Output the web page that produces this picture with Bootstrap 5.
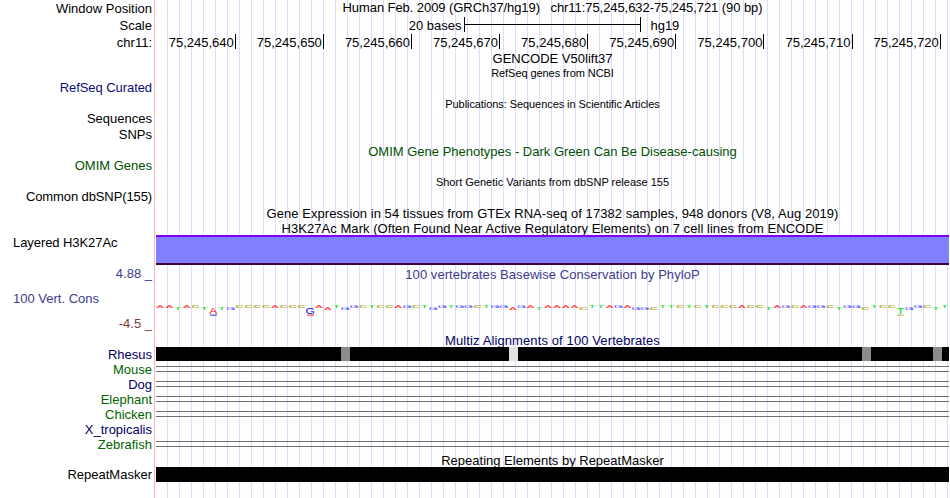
<!DOCTYPE html>
<html lang="en">
<head>
  <meta charset="UTF-8">
  <meta name="viewport" content="width=device-width, initial-scale=1">
  <title>chr11:75,245,632-75,245,721</title>
  <link href="https://cdn.jsdelivr.net/npm/bootstrap@5.3.3/dist/css/bootstrap.min.css" rel="stylesheet">
  <style>
    body { font: 13px/15px "Liberation Sans", Arial, sans-serif; color: #000; }
    .browser { width: 949px; height: 498px; }
    .browser::before {
      content: ""; position: absolute; inset: 0 0 0 154px; z-index: -1;
      border-left: 1px solid #ffb4b4;
      background: repeating-linear-gradient(90deg, #dcdcff 0 1px, transparent 1px 12px) 12px 0 no-repeat;
    }
    .line { white-space: pre; }
    .label { width: 152px; margin-right: 4px; flex: none; text-align: right; }
    .label.start { text-align: left; padding-left: 13px; }
    .track { flex: 1; min-width: 0; align-self: stretch; display: flex; align-items: center; justify-content: center; }
    .raise { padding-bottom: 2px; }
    .raise-more { padding-bottom: 4px; }
    .drop { padding-top: 2px; }
    .tiny { font-size: 11px; }
    .tight { letter-spacing: -.07px; }
    .tighter { letter-spacing: -.11px; }
    .loose { letter-spacing: .05px; }
    .looser { letter-spacing: .11px; }
    .h10 { height: 10px; } .h12 { height: 12px; } .h13 { height: 13px; }
    .h14 { height: 14px; } .h15 { height: 15px; } .h16 { height: 16px; }
    .h17 { height: 17px; } .h18 { height: 18px; } .h19 { height: 19px; }
    .h22 { height: 22px; } .h29 { height: 29px; } .h30 { height: 30px; }
    .navy { color: #0c0c78; } .forest { color: #005000; } .species { color: #006400; }
    .midnight { color: #000064; } .cons { color: #3c3c8c; } .neg { color: #783c3c; }
    .scale { padding-right: 17px; }
    .ruler { width: 177px; height: 15px; margin: 0 9px 2px 3px; border: solid #000; border-width: 0 1px; }
    .ruler::before { content: ""; display: block; height: 8px; border-bottom: 1px solid #000; }
    .ticks { justify-content: flex-start; align-items: flex-start; }
    .ticks span { width: 88.12px; flex: none; text-align: right; padding-right: 1px; border-right: 1px solid #000; height: 15px; line-height: 18px; }
    .ticks span:first-child { width: 79.75px; }
    .acetyl { background: #8080ff; border-top: 2px solid #8000ff; border-bottom: 2px solid #400040; }
    .logo { padding-top: 16px; }
    .logo span { flex: 1 1 0; width: 0; display: flex; justify-content: center; height: 10px; line-height: 10px; font-size: 12px; transform: scaleY(.22); }
    .logo .low { transform: translateY(2px) scaleY(.22); }
    .logo .tall { transform: translateY(4px) scaleY(.7); opacity: 1; }
    .logo .tall::after { content: ""; position: absolute; left: 1px; right: 1px; top: 10px; height: 1.5px; opacity: .6; }
    .base-A { color: #ff0000; opacity: .75; } .base-C { color: #aaaa28; font-weight: bold; }
    .base-G { color: #0000ff; opacity: .85; } .base-T { color: #00e000; }
    .base-A.tall::after { background: #0000ff; }
    .base-G.tall::after { background: #ff0000; }
    .base-T.tall::after { background: #aaaa28; }
    .aligned { background: #000; justify-content: flex-start; }
    .aligned i { width: 9px; height: 14px; flex: none; background: #8c8c8c; }
    .aligned .m1 { margin-left: 185px; }
    .aligned .m2 { margin-left: 159px; background: #e1e1e1; }
    .aligned .m3 { margin-left: 344px; }
    .aligned .m4 { margin-left: 62px; }
    .gap-lines::before { content: ""; width: 100%; height: 6px; border: solid #6e6e6e; border-width: 1px 0; }
  </style>
</head>
<body>

  <main class="browser position-relative overflow-hidden">
    <div class="line d-flex align-items-center h17"><div class="label">Window Position</div><div class="track tight raise">Human Feb. 2009 (GRCh37/hg19)   chr11:75,245,632-75,245,721 (90 bp)</div></div>
    <div class="line d-flex align-items-center h17"><div class="label">Scale</div><div class="track scale"><span>20 bases</span><div class="ruler"></div><span>hg19</span></div></div>
    <div class="line d-flex align-items-center h17"><div class="label">chr11:</div><div class="track ticks" id="ticks"></div></div>
    <div class="line d-flex align-items-center h15"><div class="label"></div><div class="track">GENCODE V50lift37</div></div>
    <div class="line d-flex align-items-center h15"><div class="label"></div><div class="track tiny tight">RefSeq genes from NCBI</div></div>
    <div class="line d-flex align-items-center h15"><div class="label navy raise tight">RefSeq Curated</div></div>
    <div class="line d-flex align-items-center h16"><div class="label"></div><div class="track tiny tight">Publications: Sequences in Scientific Articles</div></div>
    <div class="line d-flex align-items-center h14"><div class="label raise">Sequences</div></div>
    <div class="line d-flex align-items-center h17"><div class="label">SNPs</div></div>
    <div class="line d-flex align-items-center h17"><div class="label"></div><div class="track forest">OMIM Gene Phenotypes - Dark Green Can Be Disease-causing</div></div>
    <div class="line d-flex align-items-center h13"><div class="label forest raise">OMIM Genes</div></div>
    <div class="line d-flex align-items-center h18"><div class="label"></div><div class="track tiny">Short Genetic Variants from dbSNP release 155</div></div>
    <div class="line d-flex align-items-center h12"><div class="label raise tighter">Common dbSNP(155)</div></div>
    <div class="line d-flex align-items-center h22"><div class="label"></div><div class="track loose raise">Gene Expression in 54 tissues from GTEx RNA-seq of 17382 samples, 948 donors (V8, Aug 2019)</div></div>
    <div class="line d-flex align-items-center h10"><div class="label"></div><div class="track loose raise-more">H3K27Ac Mark (Often Found Near Active Regulatory Elements) on 7 cell lines from ENCODE</div></div>
    <div class="line d-flex align-items-center h30"><div class="label start tight align-self-start">Layered H3K27Ac</div><div class="track acetyl"></div></div>
    <div class="line d-flex align-items-center h19"><div class="label cons raise">4.88 _</div><div class="track cons loose">100 vertebrates Basewise Conservation by PhyloP</div></div>
    <div class="line d-flex align-items-center h29"><div class="label start cons">100 Vert. Cons</div><div class="track logo" id="logo"></div></div>
    <div class="line d-flex align-items-center h22"><div class="label neg raise">-4.5 _</div></div>
    <div class="line d-flex align-items-center h12"><div class="label"></div><div class="track midnight looser raise">Multiz Alignments of 100 Vertebrates</div></div>
    <div class="line d-flex align-items-center h14"><div class="label midnight">Rhesus</div><div class="track aligned"><i class="m1"></i><i class="m2"></i><i class="m3"></i><i class="m4"></i></div></div>
    <div class="line d-flex align-items-center h15"><div class="label species drop">Mouse</div><div class="track gap-lines"></div></div>
    <div class="line d-flex align-items-center h15"><div class="label midnight drop">Dog</div><div class="track gap-lines"></div></div>
    <div class="line d-flex align-items-center h15"><div class="label species drop">Elephant</div><div class="track gap-lines"></div></div>
    <div class="line d-flex align-items-center h15"><div class="label species drop">Chicken</div><div class="track gap-lines"></div></div>
    <div class="line d-flex align-items-center h15"><div class="label midnight drop">X_tropicalis</div></div>
    <div class="line d-flex align-items-center h15"><div class="label species drop">Zebrafish</div><div class="track gap-lines"></div></div>
    <div class="line d-flex align-items-center h16"><div class="label"></div><div class="track drop">Repeating Elements by RepeatMasker</div></div>
    <div class="line d-flex align-items-center h15"><div class="label">RepeatMasker</div><div class="track aligned"></div></div>
  </main>

  <script src="https://cdn.jsdelivr.net/npm/bootstrap@5.3.3/dist/js/bootstrap.bundle.min.js"></script>
  <script>
    const ticks = document.getElementById("ticks");
    for (let pos = 75245640; pos <= 75245720; pos += 10) {
      const span = document.createElement("span");
      span.textContent = pos.toLocaleString("en-US");
      ticks.appendChild(span);
    }

    // lower case = negative score, * after a base = strong negative score
    const bases = "AAtACtA*tgCCCCACCCG*AaTgGCTCCAGCTgGTGGCTGGaGAtAAAAcTTAGAggcTTCTCTCCCACCtAGCAGGCtGGcTCCT*gGCtT";
    const logo = document.getElementById("logo");
    for (const b of bases.match(/[A-Za-z]\*?/g)) {
      const span = document.createElement("span");
      const base = b[0].toUpperCase();
      span.textContent = base;
      span.className = "base-" + base + (b[1] ? " tall" : b[0] !== base ? " low" : "");
      logo.appendChild(span);
    }
  </script>

</body>
</html>
